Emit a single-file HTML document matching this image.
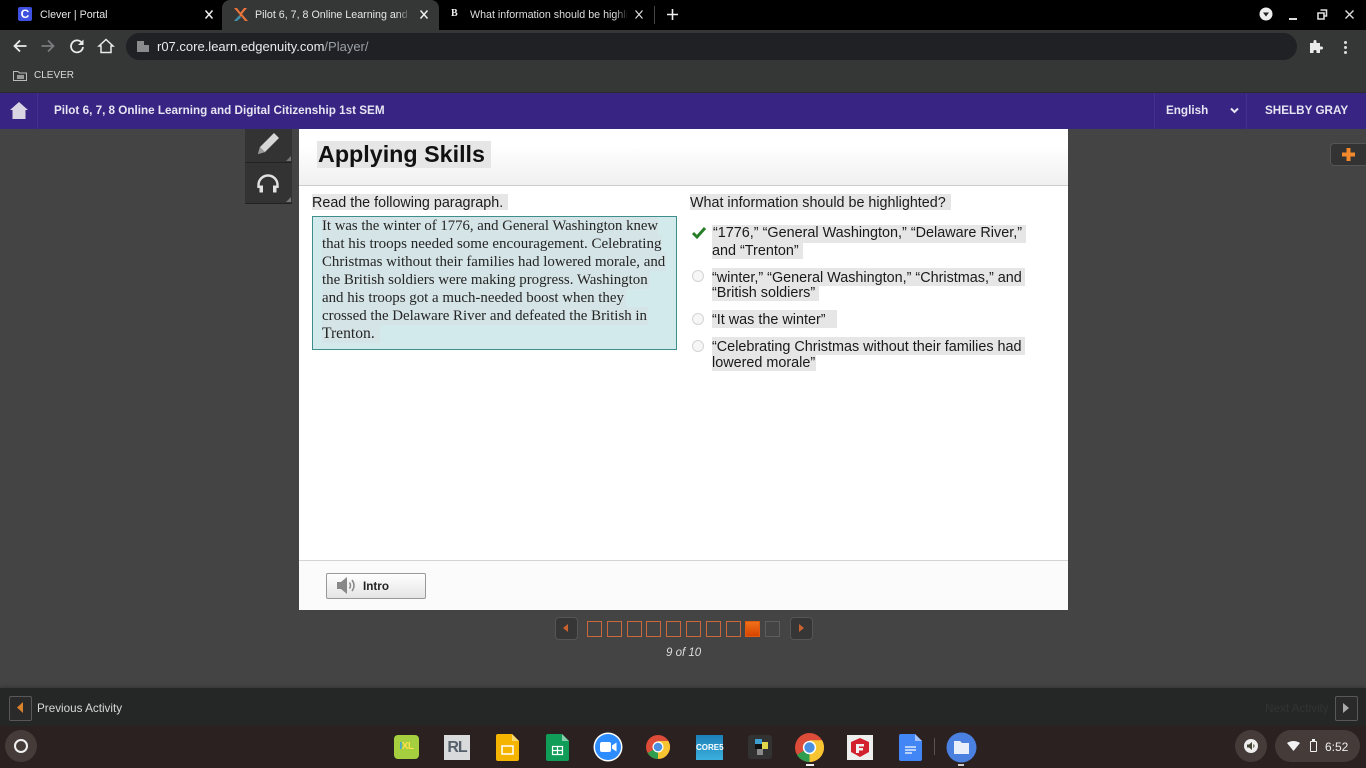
<!DOCTYPE html>
<html><head><meta charset="utf-8"><style>
html,body{margin:0;padding:0;width:1366px;height:768px;overflow:hidden;background:#444;font-family:"Liberation Sans",sans-serif}
.a{position:absolute;white-space:nowrap}
.hl{background:#e6e6e6}
.sq{position:absolute;top:621px;width:13px;height:14px;border:1px solid #c9683a}
svg{position:absolute;overflow:visible}
.opt{color:#1a1a1a;font-size:14.4px;line-height:17px}
.rad{position:absolute;left:691.500px;width:10px;height:10px;border:1px solid #d4d4d4;border-radius:50%;background:#f6f6f6}
.tab{color:#e6e6e6;font-size:10.700px;top:8px;line-height:15px}
.x{position:absolute;top:10px}
.t{font-size:11.700px;line-height:15px}
</style></head><body>
<!-- browser chrome -->
<div class="a" style="left:0;top:0;width:1366px;height:30px;background:#000"></div>
<div class="a" style="left:222px;top:0;width:217px;height:30px;background:#353636;border-radius:8px 8px 0 0"></div>
<div class="a" style="left:0;top:30px;width:1366px;height:62px;background:#353636"></div>
<div class="a" style="left:126px;top:33px;width:1171px;height:27px;background:#202124;border-radius:14px"></div>

<div class="a" style="left:18px;top:7px;width:14px;height:14px;background:#3f51e0;border-radius:2px;color:#fff;font-size:12px;font-weight:bold;text-align:center;line-height:14px">C</div>
<div class="a tab" style="left:40px">Clever | Portal</div>
<svg class="x" style="left:205px" width="8" height="9"><path d="M.5.500L7.500 8.500M7.500.500L.5 8.500" stroke="#eee" stroke-width="1.500"/></svg>
<svg style="left:233px;top:7px" width="15" height="15" viewBox="0 0 15 15"><path d="M1 1L7 8L1 14H4L8 9L12 14H15L9 7L14 1H11L7.500 5.500L4 1Z" fill="#e8743b"/><path d="M1 14L6 8.500L8 10.500L4 14Z" fill="#3d8fa8"/></svg>
<div class="a tab" style="left:255px;width:155px;overflow:hidden;-webkit-mask-image:linear-gradient(90deg,#000 92%,transparent)">Pilot 6, 7, 8 Online Learning and Digital Citizenship</div>
<svg class="x" style="left:420px" width="8" height="9"><path d="M.5.500L7.500 8.500M7.500.500L.5 8.500" stroke="#eee" stroke-width="1.500"/></svg>
<div class="a" style="left:451px;top:8px;color:#eee;font:bold 10px 'Liberation Serif',serif">B</div>
<div class="a tab" style="left:470px;width:158px;overflow:hidden;color:#ddd;-webkit-mask-image:linear-gradient(90deg,#000 92%,transparent)">What information should be highlighted</div>
<svg class="x" style="left:635px" width="8" height="9"><path d="M.5.500L7.500 8.500M7.500.500L.5 8.500" stroke="#ddd" stroke-width="1.200"/></svg>
<div class="a" style="left:654px;top:6px;width:1px;height:18px;background:#444"></div>
<svg style="left:666px;top:8px" width="13" height="13"><path d="M6.500 1V12M1 6.500H12" stroke="#eee" stroke-width="1.600"/></svg>

<svg style="left:1259px;top:7px" width="14" height="14" viewBox="0 0 14 14"><circle cx="7" cy="7" r="6.500" fill="#eee"/><path d="M4 5.500H10L7 9.500Z" fill="#222"/></svg>
<div class="a" style="left:1289px;top:18px;width:8px;height:2px;background:#ddd"></div>
<svg style="left:1317px;top:9px" width="11" height="11"><path d="M3.500 1H9.500V7H7M1 4H7V10H1Z" fill="none" stroke="#ddd" stroke-width="1.600"/></svg>
<svg style="left:1345px;top:10px" width="9" height="9"><path d="M.5.5L8.500 8.500M8.500.5L.5 8.500" stroke="#ddd" stroke-width="1.400"/></svg>

<svg style="left:12px;top:38px" width="16" height="16" viewBox="0 0 16 16"><path d="M14.500 8H2.500M8 2.500L2.500 8L8 13.500" fill="none" stroke="#eaeaea" stroke-width="1.800"/></svg>
<svg style="left:40px;top:38px" width="16" height="16" viewBox="0 0 16 16"><path d="M1.500 8H13.500M8 2.500L13.500 8L8 13.500" fill="none" stroke="#7b7c7d" stroke-width="1.800"/></svg>
<svg style="left:69px;top:38px" width="16" height="16" viewBox="0 0 16 16"><path d="M13 5A6 6 0 1 0 14 9" fill="none" stroke="#eaeaea" stroke-width="1.800"/><path d="M14.500 1.500V7H9Z" fill="#eaeaea"/></svg>
<svg style="left:98px;top:38px" width="16" height="16" viewBox="0 0 16 16"><path d="M1 8L8 1.500L15 8H13V14.500H3V8Z" fill="none" stroke="#eaeaea" stroke-width="1.500"/></svg>
<svg style="left:137px;top:41px" width="12" height="11"><path d="M0 0H7V11H0ZM7 4H12V11H7Z" fill="#8a8b8c"/></svg>
<div class="a" style="left:157px;top:39px;font-size:13px;line-height:15px;color:#e8eaed">r07.core.learn.edgenuity.com<span style="color:#9aa0a6">/Player/</span></div>
<svg style="left:1309px;top:39px" width="14" height="14" viewBox="0 0 14 14"><path d="M1 4H4.500V2.500A1.500 1.500 0 0 1 7.500 2.500V4H11V7.500H12.500A1.500 1.500 0 0 1 12.500 10.500H11V14H7.500V12.500A1.500 1.500 0 0 0 4.500 12.500V14H1Z" fill="#eaeaea"/></svg>
<div class="a" style="left:1344px;top:41px;width:3px;height:3px;background:#ddd;border-radius:50%;box-shadow:0 5px 0 #ddd,0 10px 0 #ddd"></div>

<svg style="left:13px;top:70px" width="14" height="11"><path d="M.5 1.500H5L6.500 3H13.500V10.500H.5Z" fill="none" stroke="#bbb"/><path d="M4 5H11V9H4Z" fill="#999"/></svg>
<div class="a" style="left:34px;top:69px;font-size:10px;line-height:14px;color:#d8d8d8">CLEVER</div>

<!-- purple bar -->
<div class="a" style="left:0;top:92px;width:1366px;height:37px;background:#372483;border-top:1px solid #2b2b2b;box-sizing:border-box"></div>
<div class="a" style="left:37px;top:93px;width:1px;height:36px;background:#43318f"></div>
<div class="a" style="left:1154px;top:93px;width:1px;height:36px;background:#43318f"></div>
<div class="a" style="left:1246px;top:93px;width:1px;height:36px;background:#43318f"></div>
<svg style="left:10px;top:102px" width="18" height="17"><path d="M9 0L18 8H15.500V17H2.500V8H0Z" fill="#d9d5e2"/></svg>
<div class="a t" style="left:54px;top:103px;font-weight:bold;color:#e8e5f2">Pilot 6, 7, 8 Online Learning and Digital Citizenship 1st SEM</div>
<div class="a t" style="left:1166px;top:103px;font-weight:bold;color:#e8e5f2">English</div>
<svg style="left:1230px;top:107px" width="9" height="7"><path d="M1 1.500L4.500 5L8 1.500" fill="none" stroke="#e8e5f2" stroke-width="2"/></svg>
<div class="a t" style="left:1265px;top:103px;font-weight:bold;color:#e8e5f2">SHELBY GRAY</div>

<!-- side tools -->
<div class="a" style="left:245px;top:129px;width:47px;height:33px;background:#333;border-bottom:1px solid #222"></div>
<div class="a" style="left:245px;top:163px;width:47px;height:40px;background:#333;border-bottom:1px solid #222"></div>
<svg style="left:257px;top:132px" width="23" height="23" viewBox="0 0 23 23"><path d="M17 1L22 6L8 20L1 22L3 15Z" fill="#d8d8d8"/><path d="M3 15L8 20L1 22Z" fill="#999"/></svg>
<svg style="left:256px;top:174px" width="24" height="19" viewBox="0 0 24 19"><path d="M2.500 14V11A9.500 9.500 0 0 1 21.500 11V14" fill="none" stroke="#e2e2e2" stroke-width="2.400"/><path d="M3.500 11.500H7V18.500H3.500ZM17 11.500H20.500V18.500H17Z" fill="#e2e2e2"/></svg>
<svg style="left:286px;top:156px" width="5" height="5"><path d="M5 0V5H0Z" fill="#777"/></svg>
<svg style="left:286px;top:197px" width="5" height="5"><path d="M5 0V5H0Z" fill="#777"/></svg>

<!-- content panel -->
<div class="a" style="left:299px;top:129px;width:769px;height:481px;background:#fff"></div>
<div class="a" style="left:299px;top:129px;width:769px;height:56px;background:linear-gradient(#fff 30%,#f0f0f0);border-bottom:1px solid #ccc"></div>
<div class="a hl" style="left:317px;top:141px;width:174px;height:27px"></div>
<div class="a" style="left:318px;top:139px;font-size:23.300px;line-height:30px;font-weight:bold;color:#111">Applying Skills</div>

<div class="a hl" style="left:312px;top:194px;width:196px;height:16px"></div>
<div class="a" style="left:312px;top:194px;font-size:14.330px;line-height:18px;color:#1a1a1a">Read the following paragraph.</div>

<div class="a" style="left:312px;top:216px;width:363px;height:132px;background:#d3eaec;border:1px solid #3e8f8b"></div>
<div class="a" style="left:322px;top:217px;width:340px;height:126px;font:14.900px/18px 'Liberation Serif',serif;color:#252525">
<div style="background:#d5e4e6;width:336px;font-size:14.760px">It was the winter of 1776, and General Washington knew</div>
<div style="background:#d5e4e6;width:340px;font-size:15px">that his troops needed some encouragement. Celebrating</div>
<div style="background:#d5e4e6;width:344px">Christmas without their families had lowered morale, and</div>
<div style="background:#d5e4e6;width:328px">the British soldiers were making progress. Washington</div>
<div style="background:#d5e4e6;width:304px">and his troops got a much-needed boost when they</div>
<div style="background:#d5e4e6;width:326px">crossed the Delaware River and defeated the British in</div>
<div style="background:#d5e4e6;width:58px;font-size:15.600px">Trenton.</div>
</div>

<div class="a hl" style="left:690px;top:194px;width:261px;height:16px"></div>
<div class="a" style="left:690px;top:194px;font-size:14.330px;line-height:18px;color:#1a1a1a">What information should be highlighted?</div>

<svg style="left:692px;top:226px" width="14" height="13" viewBox="0 0 14 13"><path d="M1 7L5 11L13 2" fill="none" stroke="#267f26" stroke-width="3"/></svg>
<div class="a hl" style="left:712px;top:225px;width:314px;height:18px"></div>
<div class="a hl" style="left:712px;top:243px;width:91px;height:16px"></div>
<div class="a opt" style="left:713px;top:225px">“1776,” “General Washington,” “Delaware River,”</div>
<div class="a opt" style="left:712px;top:243px">and “Trenton”</div>

<div class="rad" style="top:269.500px"></div>
<div class="a hl" style="left:712px;top:268px;width:313px;height:18px"></div>
<div class="a hl" style="left:712px;top:286px;width:107px;height:15px"></div>
<div class="a opt" style="left:712px;top:270px">“winter,” “General Washington,” “Christmas,” and</div>
<div class="a opt" style="left:712px;top:285px">“British soldiers”</div>

<div class="rad" style="top:312.500px"></div>
<div class="a hl" style="left:712px;top:310px;width:125px;height:18px"></div>
<div class="a opt" style="left:712px;top:312px">“It was the winter”</div>

<div class="rad" style="top:339.500px"></div>
<div class="a hl" style="left:712px;top:337px;width:313px;height:18px"></div>
<div class="a hl" style="left:712px;top:355px;width:104px;height:16px"></div>
<div class="a opt" style="left:712px;top:339px">“Celebrating Christmas without their families had</div>
<div class="a opt" style="left:712px;top:355px">lowered morale”</div>

<!-- panel footer -->
<div class="a" style="left:299px;top:560px;width:769px;height:50px;background:#fbfbfb;border-top:1px solid #d4d4d4;box-sizing:border-box"></div>
<div class="a" style="left:326px;top:573px;width:98px;height:24px;background:linear-gradient(#fff,#e4e4e4);border:1px solid #999;border-radius:2px"></div>
<svg style="left:337px;top:576px" width="20" height="19" viewBox="0 0 20 19"><path d="M0 6H4L10 1V18L4 13H0Z" fill="#888"/><path d="M12.500 6.500Q14.500 9.500 12.500 12.500M15 4Q19 9.500 15 15" fill="none" stroke="#888" stroke-width="1.500"/></svg>
<div class="a t" style="left:363px;top:579px;font-weight:bold;color:#222">Intro</div>

<!-- pager -->
<div class="a" style="left:555px;top:617px;width:21px;height:21px;background:#363636;border:1px solid #555;border-radius:4px"></div>
<svg style="left:563px;top:624px" width="5" height="8"><path d="M5 0V8L0 4Z" fill="#c9622f"/></svg>
<div class="sq" style="left:587px"></div><div class="sq" style="left:607px"></div><div class="sq" style="left:627px"></div><div class="sq" style="left:646px"></div><div class="sq" style="left:666px"></div><div class="sq" style="left:686px"></div><div class="sq" style="left:706px"></div><div class="sq" style="left:726px"></div>
<div class="sq" style="left:745px;background:linear-gradient(#f0701a,#d84400);border-color:#e05a10"></div>
<div class="sq" style="left:765px;border-color:#5d5d5d"></div>
<div class="a" style="left:790px;top:617px;width:21px;height:21px;background:#363636;border:1px solid #555;border-radius:4px"></div>
<svg style="left:799px;top:624px" width="5" height="8"><path d="M0 0V8L5 4Z" fill="#c9622f"/></svg>
<div class="a" style="left:666px;top:646px;font-size:11.500px;line-height:15px;font-style:italic;color:#ddd">9 of 10</div>

<!-- activity bar -->
<div class="a" style="left:0;top:688px;width:1366px;height:38px;background:#252626;box-shadow:0 -2px 3px #3a3a3a"></div>
<div class="a" style="left:9px;top:696px;width:21px;height:23px;background:#2a2a2a;border:1px solid #585858;border-radius:2px"></div>
<svg style="left:17px;top:702px" width="6" height="11"><path d="M6 0V11L0 5.500Z" fill="#d9822b"/></svg>
<div class="a t" style="left:37px;top:701px;color:#d8d8d8">Previous Activity</div>
<div class="a t" style="left:1265px;top:701px;color:#333">Next Activity</div>
<div class="a" style="left:1335px;top:696px;width:21px;height:23px;background:#2a2a2a;border:1px solid #585858;border-radius:2px"></div>
<svg style="left:1343px;top:703px" width="6" height="10"><path d="M0 0V10L6 5Z" fill="#aaa"/></svg>

<!-- shelf -->
<div class="a" style="left:0;top:726px;width:1366px;height:42px;background:#2a2120"></div>
<div class="a" style="left:5px;top:730px;width:32px;height:32px;background:#453c3a;border-radius:50%"></div>
<div class="a" style="left:14px;top:739px;width:10px;height:10px;border:2px solid #f2f2f2;border-radius:50%"></div>

<div class="a" style="left:394px;top:735px;width:25px;height:24px;background:#a5cf3f;border-radius:4px;font:bold 10px/24px 'Liberation Sans',sans-serif;color:#ffe14a;text-align:center;letter-spacing:-.5px"><span style="color:#3aa0e0">I</span>XL</div>
<div class="a" style="left:444px;top:735px;width:26px;height:25px;background:#d9dadb;font:bold 16px/25px 'Liberation Sans',sans-serif;color:#55606b;text-align:center;letter-spacing:-1px">RL</div>
<svg style="left:496px;top:734px" width="23" height="27"><path d="M2 0H16L23 7V25A2 2 0 0 1 21 27H2A2 2 0 0 1 0 25V2A2 2 0 0 1 2 0Z" fill="#f4b400"/><path d="M16 0L23 7H16Z" fill="#f8d775"/><rect x="6" y="12" width="11" height="8" fill="none" stroke="#fff" stroke-width="1.500"/></svg>
<svg style="left:546px;top:734px" width="23" height="27"><path d="M2 0H16L23 7V25A2 2 0 0 1 21 27H2A2 2 0 0 1 0 25V2A2 2 0 0 1 2 0Z" fill="#0f9d58"/><path d="M16 0L23 7H16Z" fill="#87ceac"/><path d="M6.500 12.500H16.500V20.500H6.500ZM6.500 16.500H16.500M11.500 12.500V20.500" fill="none" stroke="#fff" stroke-width="1.200"/></svg>
<svg style="left:593px;top:732px" width="30" height="30"><circle cx="15" cy="15" r="14.500" fill="#fff"/><circle cx="15" cy="15" r="13" fill="#2d8cff"/><rect x="7" y="10" width="11" height="10" rx="2" fill="#fff"/><path d="M19 13.500L23.500 10.500V19.500L19 16.500Z" fill="#fff"/></svg>
<svg style="left:646px;top:735px" width="24" height="24" viewBox="0 0 24 24"><circle cx="12" cy="12" r="12" fill="#dd4b39"/><path d="M12 12L1.600 18A12 12 0 0 0 12 24Z" fill="#2f9e4f"/><path d="M12 12L12 24A12 12 0 0 0 22.400 6H12Z" fill="#f7c531"/><circle cx="12" cy="12" r="5.500" fill="#fff"/><circle cx="12" cy="12" r="4.300" fill="#4a8fe0"/></svg>
<div class="a" style="left:696px;top:735px;width:27px;height:25px;background:linear-gradient(#1d7fb8,#3bb0dd);font:bold 8px/25px 'Liberation Sans',sans-serif;color:#fff;text-align:center">CORE5</div>
<div class="a" style="left:748px;top:735px;width:24px;height:24px;background:#323232;border-radius:3px"></div>
<svg style="left:753px;top:739px" width="15" height="16"><path d="M2 0H9V5H2Z" fill="#3e9ed0"/><path d="M9 3H15V10H9Z" fill="#e0d84a"/><path d="M2 5H9V10H2Z" fill="#111"/><path d="M4 10H10V16H4Z" fill="#8a8a8a"/></svg>
<svg style="left:795px;top:733px" width="29" height="29" viewBox="0 0 24 24"><circle cx="12" cy="12" r="12" fill="#dd4b39"/><path d="M12 12L1.600 18A12 12 0 0 0 12 24Z" fill="#2f9e4f"/><path d="M12 12L12 24A12 12 0 0 0 22.400 6H12Z" fill="#f7c531"/><circle cx="12" cy="12" r="5.500" fill="#fff"/><circle cx="12" cy="12" r="4.300" fill="#4a8fe0"/></svg>
<div class="a" style="left:806px;top:764px;width:8px;height:2px;background:#eee"></div>
<div class="a" style="left:847px;top:735px;width:26px;height:25px;background:#eee"></div>
<svg style="left:851px;top:738px" width="18" height="19"><path d="M9 0L18 4V14L9 19L0 14V4Z" fill="#d3202e"/><path d="M5 6H13V8.500H8V10H12V12.500H8V15H5Z" fill="#f2f2f2"/></svg>
<svg style="left:899px;top:734px" width="23" height="27"><path d="M2 0H16L23 7V25A2 2 0 0 1 21 27H2A2 2 0 0 1 0 25V2A2 2 0 0 1 2 0Z" fill="#4285f4"/><path d="M16 0L23 7H16Z" fill="#a1c2fa"/><path d="M6 13H17M6 16H17M6 19H13" stroke="#fff" stroke-width="1.300"/></svg>
<div class="a" style="left:934px;top:738px;width:1px;height:17px;background:#5a5352"></div>
<svg style="left:946px;top:732px" width="31" height="31"><circle cx="15.500" cy="15.500" r="15" fill="#4a80e0"/><path d="M8 9H14L16 11H23V22H8Z" fill="#e8effb"/></svg>
<div class="a" style="left:958px;top:764px;width:6px;height:2px;background:#ccc"></div>

<!-- tray -->
<div class="a" style="left:1235px;top:730px;width:32px;height:32px;background:#453c3a;border-radius:50%"></div>
<svg style="left:1244px;top:739px" width="14" height="14"><circle cx="7" cy="7" r="7" fill="#eee"/><path d="M3 5.500H5L8 3V11L5 8.500H3Z" fill="#443"/><path d="M9.500 5.500Q10.500 7 9.500 8.500" fill="none" stroke="#443"/></svg>
<div class="a" style="left:1275px;top:730px;width:85px;height:32px;background:#453c3a;border-radius:16px"></div>
<svg style="left:1287px;top:741px" width="13" height="10"><path d="M0 2Q6.500 -2 13 2L6.500 10Z" fill="#f2f2f2"/></svg>
<div class="a" style="left:1310px;top:741px;width:5px;height:9px;border:1.500px solid #f2f2f2;border-radius:1px"></div>
<div class="a" style="left:1312px;top:739px;width:3px;height:2px;background:#f2f2f2"></div>
<div class="a" style="left:1325px;top:740px;font-size:12px;line-height:14px;color:#eee">6:52</div>

<!-- plus tab -->
<div class="a" style="left:1330px;top:143px;width:40px;height:23px;background:#333;border:1px solid #555;border-radius:4px;box-sizing:border-box"></div>
<svg style="left:1342px;top:148px" width="13" height="13"><path d="M6.500 0V13M0 6.500H13" stroke="#f08a2c" stroke-width="4"/></svg>
</body></html>
